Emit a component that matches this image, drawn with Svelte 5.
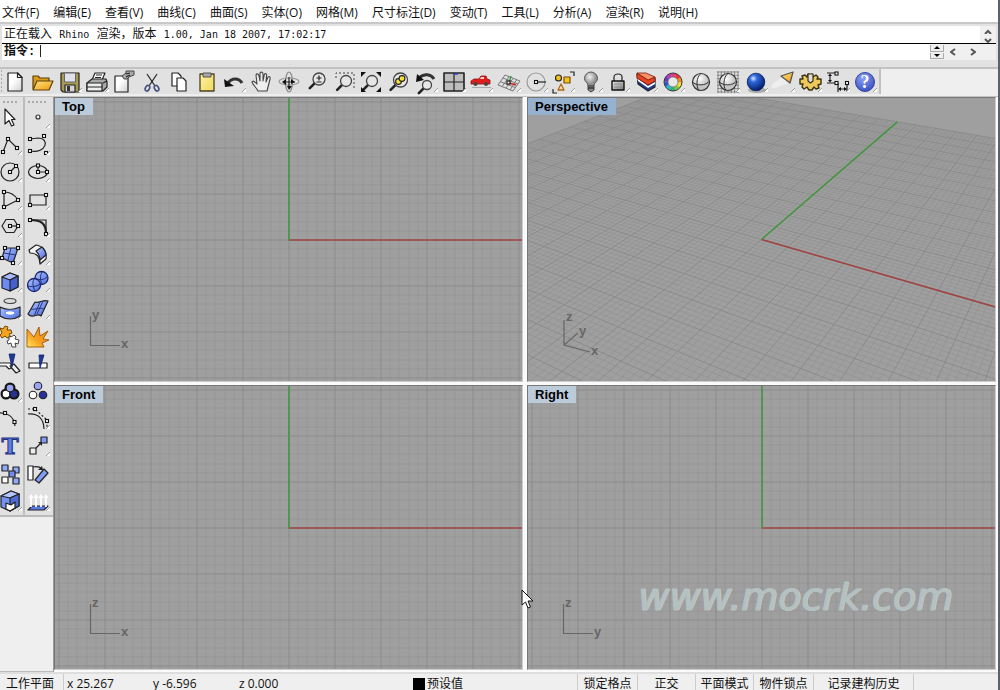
<script>
  const menus = ['文件(F)', '编辑(E)', '查看(V)', '曲线(C)', '曲面(S)', '实体(O)', '网格(M)', '尺寸标注(D)', '变动(T)', '工具(L)', '分析(A)', '渲染(R)', '说明(H)'];

  // square control-point handle
  const n = (x, y) => `<rect x="${x - 1.5}" y="${y - 1.5}" width="3" height="3" fill="#fff" stroke="#111" stroke-width="1.1"/>`;
  const s = (d, extra = '') => `<path d="${d}" fill="none" stroke="#222" stroke-width="1.2" ${extra}/>`;
  const f = (d, fill, extra = 'stroke="#222" stroke-width="1.2"') => `<path d="${d}" fill="${fill}" stroke-linejoin="round" ${extra}/>`;
  const w = (d, stroke, width) => `<path d="${d}" fill="none" stroke="${stroke}" stroke-width="${width}"/>`;
  const lens = (x, y, r, fill = '#e6e6e6') =>
    `<path d="M${x - r * 0.7} ${y + r * 0.7}L${x - r * 0.7 - 5} ${y + r * 0.7 + 5}" stroke="#222" stroke-width="2.6" stroke-linecap="round"/><circle cx="${x}" cy="${y}" r="${r}" fill="${fill}" stroke="#444" stroke-width="1.3"/>`;
  const dot = (x, y, r, fill) => `<circle cx="${x}" cy="${y}" r="${r}" fill="${fill}" stroke="#222" stroke-width="1.1"/>`;

  const hue = ['#e8342c', '#f08a1c', '#f4e02a', '#7cc83a', '#2cb06a', '#28b8d8', '#2a58d0', '#6a3ac0', '#b83ab8', '#e03a80'];
  const wheel = hue
    .map((c, i) => {
      const a = (i / 10) * Math.PI * 2 - 1.2, b = a + 0.66;
      return w(`M${13 + 7 * Math.cos(a)} ${13 + 7 * Math.sin(a)}A7 7 0 0 1 ${13 + 7 * Math.cos(b)} ${13 + 7 * Math.sin(b)}`, c, 3.6);
    })
    .join('');
  const mesh = [3, 6.3, 9.6, 13, 16.3, 19.6, 23].map((v) => `M${v} 2V24M2 ${v}H24`).join('');
  const wire = '<circle cx="13" cy="13" r="8.5" fill="url(#pearl)" stroke="#333" stroke-width="1.2"/><path d="M13 4.500C8 8 8 18 11 21.500M4.500 13C8 17 18 17 21.500 12" fill="none" stroke="#333"/>';

  const tools = [
    ['新建', f('M6 4H15.500L20 8.500V22H6Z', 'url(#paper)') + f('M15.500 4V8.500H20Z', '#fff'), 0],
    ['打开', f('M4 20V7H9L11 9H20V12', '#d99a1c', 'stroke="#5c420a" stroke-width="1.2"') + f('M4 21L8 12H24L20 21Z', 'url(#gold)', 'stroke="#5c420a" stroke-width="1.2"'), 0],
    ['保存', f('M4 4H22V23H6L4 21Z', '#a89b52') + f('M7.500 4H18.500V13H7.500Z', '#dfe0ea', 'stroke="#666"') + f('M8 16H18V23H8Z', '#d6d6d6') + '<path d="M10 17H13V22H10Z" fill="#333"/>', 1],
    ['打印', f('M8 11L11 4H21L18 11Z', '#fff') + s('M12 6H18M11 8.500H17') + f('M3 14L8 10H22L23 13V18L19 22H3Z', '#aaa') + f('M3 14H18V22H3Z', '#eee') + s('M3 18H18M19 14L23 12', 'stroke-width="2"'), 1],
    ['属性', f('M4 7H17V23H4Z', 'url(#paper)') + f('M11 7L15 4V2H23V6L18 8L16 10H13Z', '#a9a9a9', 'stroke="#444"') + s('M15 5L19 4M15 8L19 6', 'stroke="#333"'), 0],
    ['剪切', s('M8 5L16 17', 'stroke="#444" stroke-width="1.8"') + s('M18 5L10 17', 'stroke="#444" stroke-width="1.8"') + '<ellipse cx="8.500" cy="19" rx="2" ry="3" transform="rotate(30 8 19)" fill="none" stroke="#4a5080" stroke-width="1.600"/><ellipse cx="17.500" cy="19" rx="2" ry="3" transform="rotate(-30 18 19)" fill="none" stroke="#4a5080" stroke-width="1.600"/>', 0],
    ['复制', f('M6 4H12L15 7V17H6Z', '#fff') + f('M11 9H17L20 12V22H11Z', '#fff'), 0],
    ['粘贴', f('M6 5H20V22H6Z', 'url(#yellow)', 'stroke="#4a4320" stroke-width="1.3"') + f('M9 4H17V8H9Z', '#a8a8a0', 'stroke="#555"'), 0],
    ['撤销', w('M6 15C11 8 18 9 21 14', '#333', 3.2) + '<path d="M3 10L4 18L13 17Z" fill="#111"/>', 1],
    ['平移', f('M9 22C7 18 4 16 3 13C4 11 6 13 8 15L7 6C8 4 9.500 5 10 7L11 12V4C12 2.500 14 3 14 5V12L15.500 5C17 4 18 5 17.500 7L17 13L19 8C20.500 7 21.500 8 21 10L18 22Z', '#eee', 'stroke="#444" stroke-width="1.1"'), 0],
    ['旋转视图', '<ellipse cx="13" cy="12.500" rx="10" ry="3.500" fill="none" stroke="#999" stroke-width="1.200"/><ellipse cx="13" cy="13" rx="3.500" ry="10" fill="none" stroke="#888" stroke-width="1.200"/>' + s('M8 13H19M13 8V18') + '<path d="M6 13L10 10V16ZM15 10L19 13L15 15ZM11 17H16L13 21Z" fill="#111"/>', 0],
    ['缩放', lens(15, 10, 6) + s('M12.500 9H17.500M15 6.500V11.500M12.500 13H17.500'), 0],
    ['框选缩放', '<path d="M5 9V4H23V20" fill="none" stroke="#444" stroke-dasharray="2 2"/>' + lens(15, 12, 5.5), 0],
    ['缩放至最大', lens(14, 12, 5.5) + '<path d="M3 3H8L3 8ZM23 3V8L18 3ZM3 23V18L8 23ZM23 23H18L23 18Z" fill="#111"/>', 0],
    ['缩放至选取', lens(14.5, 11, 7) + dot(12.5, 12.5, 2.9, '#f6e03a') + dot(16, 9.5, 2.9, '#f6e03a'), 0],
    ['复原视图', lens(14, 16, 4.5) + w('M6 9C11 4 18 5 21 10', '#333', 3) + '<path d="M4 5L3 13L11 11Z" fill="#111"/>', 1],
    ['四视图', f('M3 4H23V22H3Z', '#bdbdbd', 'stroke="#222" stroke-width="1.6"') + s('M13 4V22M3 13H23', 'stroke-width="1.600"') + '<path d="M13 5H17" stroke="#2c46b0" stroke-width="1.500"/>', 1],
    ['右视图', '<path d="M3 15V12L6 10H11L13 7H18L19 10L22 11V15Z" fill="#e01e1e" stroke="#901010" stroke-width=".8"/><path d="M13 8H16V10H12Z" fill="#f3d0d0"/><circle cx="7.500" cy="15" r="2" fill="#444"/><circle cx="18" cy="15" r="2" fill="#444"/><path d="M4 18.500H23" stroke="#aaa"/>', 1],
    ['工作平面', w('M9 6L24 12L17 22L2 16ZM7 9L22 15M4 12.500L19 18.500M13 8L6 17.500M17 9.500L10 19M20.500 11L14 21', '#777', 1) + w('M13 14L15 7', '#2b9c3a', 1.3) + w('M13 14L20 16', '#c22', 1.5) + n(12.5, 13.5), 1],
    ['设置', '<circle cx="13" cy="13" r="9" fill="none" stroke="#999" stroke-width="1.200"/>' + s('M13 13H23') + n(13, 13), 1],
    ['选取', dot(8.5, 9, 3, '#f5c21c') + f('M14 8H20V14H14Z', '#f5c21c', 'stroke="#7a4c08" stroke-width="1.2"') + f('M8 21L11 15L14 21Z', '#f1e1b8', 'stroke="#b06a10" stroke-width="1.3"') + s('M20 3H24V7M3 20V24H7', 'stroke-width="1.600"'), 1],
    ['隐藏', f('M10 17C10 13 6.500 13 6.500 9.500A6.500 6.500 0 0 1 19.500 9.500C19.500 13 16 13 16 17Z', 'url(#bulb)', 'stroke="#555"') + f('M10 17H16V21L13 23L10 21Z', '#888', 'stroke="#444"') + s('M10 19H16', 'stroke="#eee"'), 1],
    ['锁定', s('M9 12V8C9 4 17 4 17 8V12', 'stroke-width="1.900"') + f('M7 12H19V21H7Z', 'url(#metal)', 'stroke="#111" stroke-width="1.4"') + w('M9 15H17M9 18H17', '#888', 1), 1],
    ['图层', f('M4 5L5 15L15 22L22 18V9L15 13Z', '#223a88') + f('M4 9L15 17L22 13V15L15 19L5 12Z', '#fff', '') + f('M4 4L15 11L22 8V12L15 16L4 9Z', '#e7431f', 'stroke="#7a1b10" stroke-width=".8"') + f('M4 4L13 4L22 8L15 11Z', '#f89068', 'stroke="#7a1b10" stroke-width=".8"'), 1],
    ['颜色', wheel + '<circle cx="13" cy="13" r="9" fill="none" stroke="#333" stroke-width="1"/><circle cx="13" cy="13" r="5" fill="#e8e8e8" stroke="#444" stroke-width=".6"/>', 1],
    ['着色', wire, 0],
    ['着色网格', `<path d="${mesh}" stroke="#777" stroke-width=".8"/>` + wire, 1],
    ['渲染', '<ellipse cx="14" cy="21" rx="9" ry="3" fill="#aaa"/><circle cx="13" cy="13" r="8.800" fill="url(#ball)" stroke="#06205e" stroke-width=".8"/>', 1],
    ['灯光', '<path d="M14 7L2 15V20L19 14Z" fill="#f4f4f4" opacity=".7"/>' + f('M11 7L23 3L20 14Z', 'url(#gold)', 'stroke="#555" stroke-width="1.300"'), 1],
    ['选项', f('M3 10L6 10L5 7L8 6L10 8L11 5H12V10H15V5L16 8L19 6L21 8L20 10L24 10V15L21 16L22 19L19 20L17 18L15 21H12L10 18L7 20L5 18L6 15L3 15Z', '#edc95c', 'stroke="#3b3010" stroke-width="1.400"') + f('M11 5H16V12L13.500 14L11 12Z', '#ddd', 'stroke="#3b3010" stroke-width="1.200"'), 1],
    ['尺寸标注', s('M2 4H11M2 14H10M5 6V12M13 14V23M22 14V23M14 20H21') + '<path d="M3 7L5 4.500L7 7ZM3 11L5 13.500L7 11ZM16 18V22L13 20ZM19 18V22L22 20Z" fill="#111"/>' + n(11.5, 4.5) + n(11.5, 14) + n(22, 14), 1],
    ['说明', '<circle cx="13" cy="13" r="9.500" fill="url(#help)" stroke="#3344a0"/><text x="13" y="19" text-anchor="middle" font-family="Liberation Serif, serif" font-weight="700" font-size="18" fill="#fff">?</text>', 1],
  ];

  const left = [
    ['选取', f('M8 4V19L12 15.500L14.500 21L17 20L14.500 14.500H18Z', '#fff'), 0],
    ['多重直线', s('M6 20L11 7L20 16') + n(6, 20) + n(11, 7) + n(20, 16), 1],
    ['圆', '<circle cx="13" cy="13" r="9" fill="none" stroke="#222" stroke-width="1.200"/>' + s('M13 13L19 7') + n(13, 13) + n(19, 7), 1],
    ['圆弧', s('M7 20L21 13', 'stroke="#999"') + s('M7 20V5C14 5 18 8 21 13') + n(7, 5) + n(21, 13) + n(7, 20), 1],
    ['多边形', s('M5 12L9 5.500H17L21 12L17 18.500H9Z') + s('M13 12H21') + n(13, 12) + n(21, 12), 1],
    ['曲面', f('M8 6H21L16 21L5 16Z', 'url(#blue)') + w('M14 6L11 18M7 11L19 13', '#26357c', 1) + n(8, 6) + n(21, 6) + n(5, 16) + n(16, 21), 1],
    ['立方体', f('M5 8L13 4L21 7V18L13 22L5 19Z', '#6c8af4') + f('M5 8L13 4L21 7L13 11Z', '#a9bcff') + f('M13 11L21 7V18L13 22Z', '#4460cc'), 1],
    ['挤出曲面', '<ellipse cx="13" cy="5" rx="6" ry="2.500" fill="#ddd" stroke="#444" stroke-width="1.200"/>' + f('M3 11C9 14 17 14 23 11V20C17 24 9 24 3 20Z', 'url(#blue)') + '<ellipse cx="13" cy="17" rx="5" ry="2.300" fill="#fff" stroke="#6a86f0" stroke-width="1.200"/>', 1],
    ['组合', f('M3 4L6 5L8 2L11 3L10 6L14 6L15 9L12 10L14 13L10 14L8 12L5 14L3 11L5 9Z', '#f5a51c', 'stroke="#704808"') + f('M12 12L14 13L17 11L19 13L18 15L22 16L21 20L18 19L19 23L15 23L14 19L11 20L10 17L12 16Z', '#fff', 'stroke="#444"'), 0],
    ['修剪', f('M0 12H13L16 16L12 18L9 15H0Z', '#fff') + f('M13 15L17 13L23 20L19 22Z', '#eee') + f('M12 3H18L15 16Z', '#1d3a94', 'stroke="#10246a" stroke-width=".8"'), 0],
    ['群组', '<g stroke="#111" stroke-width="4"><circle cx="13" cy="9" r="3.500"/><circle cx="9" cy="15" r="3.500"/><circle cx="17" cy="15" r="3.500"/></g>' + dot(9, 15, 3.8, '#fff') + dot(17, 15, 3.8, '#28309a') + dot(13, 9, 3.8, '#9ba6f2'), 1],
    ['编辑点', s('M0 7C10 6 17 10 18 20', 'stroke-width="1.700"') + n(8, 7) + n(17.5, 16), 0],
    ['文字', '<text x="13" y="21" text-anchor="middle" font-family="DejaVu Serif, serif" font-weight="700" font-size="23" fill="#5c80e8" stroke="#1d2f78" stroke-width="1">T</text>', 0],
    ['移动', f('M5 4H11V10H5Z', '#8fa9fb') + f('M16 6H22V12H16Z', '#8fa9fb') + f('M5 16H11V22H5Z', '#fff') + f('M12 10H18V16H12Z', '#6f8df2') + f('M16 17H22V23H16Z', '#8fa9fb'), 0],
    ['布尔运算', f('M4 8L14 3L22 6V18L13 23L4 19Z', '#7492f4') + f('M4 8L14 3L22 6L13 10Z', '#b5c6ff') + f('M13 10L22 6V18L13 23Z', '#4c6cd4') + f('M9 15L14 17L18 14V20L13 23L9 21Z', '#fff'), 1],
  ];

  const right = [
    ['点', '<circle cx="13" cy="12" r="2" fill="#eee" stroke="#333" stroke-width="1.200"/>', 1],
    ['曲线', s('M5 19C22 22 25 6 13 6L5 7') + n(5, 19) + n(5, 7) + n(19, 4) + n(21, 21), 1],
    ['椭圆', '<ellipse cx="13" cy="13" rx="9.500" ry="6.500" fill="none" stroke="#222" stroke-width="1.200"/>' + s('M13 7V13H22') + n(13, 6.5) + n(13, 13) + n(22, 13), 1],
    ['矩形', s('M5 8H21V18H5Z') + n(21, 8) + n(5, 18), 1],
    ['圆角', s('M5 6H21V20', 'stroke="#888"') + w('M5 6C16 6 21 9 21 20', '#222', 2.2) + n(5, 6) + n(21, 20), 1],
    ['旋转成形', f('M4 8L11 3C18 4 22 10 21 17L15 22C15 15 12 11 5 11Z', '#f4f4f4') + f('M11 9L17 5C20 8 21 10 21 13L15 18C15 14 13 11 11 9Z', 'url(#blue)'), 1],
    ['布尔联集', '<circle cx="16.500" cy="9" r="6.500" fill="url(#blue)" stroke="#18276c" stroke-width="1.300"/><circle cx="9" cy="16" r="6.500" fill="url(#blue)" stroke="#18276c" stroke-width="1.300"/><path d="M17 3C15 7 15 11 17 15M11 10C15 11 19 11 22 8M9 10C7 14 8 18 10 22M3 17C7 18 11 18 15 15" fill="none" stroke="#18276c" stroke-width=".9"/>', 1],
    ['曲面工具', f('M3 18L10 6C14 8 18 3 23 5L16 20C12 16 8 24 3 18Z', 'url(#blue)') + w('M9 20L15 6M6 13C11 14 14 11 19 13M12 18L18 5', '#26357c', 1), 1],
    ['炸开', f('M2 23V5L9 13L14 3L15 12L23 7L18 15L24 16L17 19L19 23Z', 'url(#flame)', 'stroke="#9a5708" stroke-width=".9"'), 0],
    ['分割', f('M4 12H22V17H4Z', '#fff') + f('M14 4H19L15 17Z', '#1d3a94', 'stroke="#10246a" stroke-width=".8"'), 0],
    ['解散群组', dot(13, 7, 3.8, '#9ba6f2') + dot(8, 16, 3.8, '#fff') + dot(18, 16, 3.8, '#28309a'), 0],
    ['控制点', s('M3 8C13 7 19 13 19 23', 'stroke-width="1.900"') + s('M3 3H10L22 14V23', 'stroke-dasharray="2 2"') + n(10, 3) + n(22, 15), 1],
    ['缩放', f('M5 15H11V21H5Z', '#eee') + f('M16 4H22V10H16Z', '#7f9bf6') + s('M11 15L16 10') + '<path d="M17 9V13L13 9Z" fill="#222"/>', 1],
    ['定位', f('M3 5H8V19H3Z', '#fff') + f('M10 19L19 8L23 12L14 22Z', '#7f9bf6') + s('M8 6C13 5 16 7 17 8') + '<path d="M13 9L18 9L17 5Z" fill="#222"/>', 0],
    ['拉伸', f('M3 22L7 18H23L19 22Z', '#5a7ae8') + '<path d="M6 19V8M11 19V8M16 19V8M21 19V8" stroke="#fff" stroke-width="1.800"/><path d="M3.500 10L6 6L8.500 10ZM8.500 10L11 6L13.500 10ZM13.500 10L16 6L18.500 10ZM18.500 10L21 6L23.500 10Z" fill="#fff"/>', 1],
  ];

  const corner = '<path d="M25 19V23H21Z" fill="#fff"/><path d="M21 23L25 19" stroke="#888" stroke-width=".8"/>';

  // construction plane grid, 9.2px per unit, heavier line every fifth unit
  let minor = '', major = '';
  for (let i = -70; i <= 70; i++) {
    const p = Math.round(i * 9.2) + 0.5;
    const d = `M${p} -644V644M-644 ${p}H644`;
    if (i % 5) minor += d;
    else major += d;
  }

  // camera looks at the origin from 100 units away, 30 degrees above the plane
  const project = (x, y) => {
    const depth = 100 - 0.433 * x + 0.75 * y;
    return `${((592 * (0.866 * x + 0.5 * y)) / depth).toFixed(1)} ${((-592 * (-0.25 * x + 0.433 * y)) / depth).toFixed(1)}`;
  };
  let pMinor = '', pMajor = '';
  for (let i = -70; i <= 70; i++) {
    const d = `M${project(i, -70)}L${project(i, 70)}M${project(-70, i)}L${project(70, i)}`;
    if (i % 5) pMinor += d;
    else pMajor += d;
  }

  const views = [
    { name: 'Top', h: 'x', v: 'y' },
    { name: 'Perspective', active: true },
    { name: 'Front', h: 'x', v: 'z' },
    { name: 'Right', h: 'y', v: 'z', mark: true },
  ];
</script>

{#snippet tool([label, body, more])}
  <button class="tool" aria-label={label}>
    <svg width="26" height="26" viewBox="0 0 26 26">{@html body + (more ? corner : '')}</svg>
  </button>
{/snippet}

<svg class="defs" width="0" height="0" aria-hidden="true">
  <defs>
    <linearGradient id="paper" x2="1" y2="1"><stop offset=".4" stop-color="#fff" /><stop offset="1" stop-color="#d0d0d0" /></linearGradient>
    <linearGradient id="gold" x2="1" y2="1"><stop stop-color="#ffe680" /><stop offset="1" stop-color="#f09810" /></linearGradient>
    <linearGradient id="yellow" x2="1" y2="1"><stop stop-color="#fff3a0" /><stop offset="1" stop-color="#f0d860" /></linearGradient>
    <linearGradient id="flame" x1="1" x2="0" y2="1"><stop stop-color="#f08010" /><stop offset=".6" stop-color="#f8a020" /><stop offset="1" stop-color="#ffe860" /></linearGradient>
    <linearGradient id="metal" x2="1" y2="1"><stop stop-color="#eee" /><stop offset="1" stop-color="#777" /></linearGradient>
    <linearGradient id="blue" x2="1" y2="1"><stop stop-color="#b4c6ff" /><stop offset="1" stop-color="#4a6ae0" /></linearGradient>
    <radialGradient id="bulb" cx=".4" cy=".35"><stop stop-color="#f0f0f0" /><stop offset="1" stop-color="#909090" /></radialGradient>
    <radialGradient id="pearl" cx=".4" cy=".3"><stop stop-color="#fff" /><stop offset="1" stop-color="#c4c4c4" /></radialGradient>
    <radialGradient id="ball" cx=".35" cy=".3" r=".7"><stop stop-color="#d8e8ff" /><stop offset=".3" stop-color="#2f68dc" /><stop offset="1" stop-color="#03206c" /></radialGradient>
    <radialGradient id="help" cx=".4" cy=".3" r=".7"><stop stop-color="#8ea2f4" /><stop offset="1" stop-color="#3c52c4" /></radialGradient>
  </defs>
</svg>

<div class="app">
  <nav class="menu">
    {#each menus as m}<button>{m}</button>{/each}
  </nav>

  <section class="command">
    <div class="history">
      <p>正在载入 <span>Rhino</span> 渲染，版本 <span>1.00, Jan 18 2007, 17:02:17</span></p>
      <div class="scroll">
        <button aria-label="向上"><svg width="10" height="5" viewBox="0 0 10 5"><path d="M2 5L5 2L8 5" /></svg></button>
        <button aria-label="向下"><svg width="10" height="5" viewBox="0 0 10 5"><path d="M2 1L5 4L8 1" /></svg></button>
      </div>
    </div>
    <div class="prompt">
      <label for="cmd">指令:</label>
      <i class="caret"></i>
      <input id="cmd" type="text" />
      <div class="spin">
        <button aria-label="增加"><svg width="6" height="3" viewBox="0 0 6 3"><path d="M0 3L3 0L6 3Z" /></svg></button>
        <button aria-label="减少"><svg width="6" height="3" viewBox="0 0 6 3"><path d="M0 0L3 3L6 0Z" /></svg></button>
      </div>
      <div class="pager">
        <button aria-label="上一个"><svg width="6" height="8" viewBox="0 0 6 8"><path d="M5 1L1 4L5 7" /></svg></button>
        <button aria-label="下一个"><svg width="6" height="8" viewBox="0 0 6 8"><path d="M1 1L5 4L1 7" /></svg></button>
      </div>
    </div>
  </section>

  <div class="toolbar">
    <div class="tools">
      {#each tools as t}{@render tool(t)}{/each}
    </div>
  </div>

  <main>
    <aside>
      <div class="box">
        <div class="col first">{#each left as t}{@render tool(t)}{/each}</div>
        <div class="col">{#each right as t}{@render tool(t)}{/each}</div>
      </div>
    </aside>
    <div class="views">
      {#each views as v}
        <section class="view">
          <svg class="scene" width="100%" height="100%">
            <svg x="50%" y="50%" overflow="visible">
              {#if v.active}
                <path d={pMinor} class="thin" />
                <path d={pMajor} class="thick" />
                <path d="M{project(0, 0)}L{project(70, 0)}" class="red" />
                <path d="M{project(0, 0)}L{project(0, 70)}" class="green" />
              {:else}
                <path d={minor} class="minor" />
                <path d={major} class="major" />
                <path d="M0 0.500H644" class="red" />
                <path d="M0.500 1V-644" class="green" />
              {/if}
            </svg>
            <svg x="0" y="100%" overflow="visible" class="axes">
              {#if v.active}
                <path d="M36 -61V-36L62 -29M36 -36L50 -48" />
                <text x="38" y="-60">z</text>
                <text x="51" y="-46">y</text>
                <text x="63" y="-26">x</text>
              {:else}
                <path d="M35.500 -65V-35.500H65" />
                <text x="37" y="-62">{v.v}</text>
                <text x="66" y="-33">{v.h}</text>
              {/if}
            </svg>
          </svg>
          <h2 class:active={v.active}>{v.name}</h2>
          {#if v.mark}<div class="mark">www.mocrk.com</div>{/if}
        </section>
      {/each}
      <svg class="cursor" width="14" height="20" viewBox="0 0 14 20"><path d="M1 1V16L4.500 13L7 19L9.500 18L7 12H12Z" fill="#fff" stroke="#111" /></svg>
    </div>
  </main>

  <footer>
    <span class="plane">工作平面</span>
    <span class="coord">x 25.267</span>
    <span class="coord">y -6.596</span>
    <span class="coord">z 0.000</span>
    <span class="layer"><i></i>预设值</span>
    <button class="wide">锁定格点</button>
    <button>正交</button>
    <button>平面模式</button>
    <button class="wide">物件锁点</button>
    <button class="record">记录建构历史</button>
    <span class="end"></span>
  </footer>
</div>

<style>
  :global(body) { margin: 0; background: #5b6168; }
  .defs { position: absolute; }
  button { border: 0; padding: 0; margin: 0; background: none; font: inherit; color: inherit; }
  .app {
    height: 100vh; margin-right: 2px; display: flex; flex-direction: column; overflow: hidden;
    background: #efefef; color: #111; font: 12px/16px "Open Sans", "Noto Sans CJK SC", sans-serif;
  }
  .menu { display: flex; gap: 14px; height: 24px; padding: 4px 2px 0; align-items: center; background: #fff; border-bottom: 2px solid #c8c8c8; flex: none; box-sizing: border-box; white-space: nowrap; }
  .command { flex: none; padding: 2px 2px 7px; background: #e2e2e2; border-bottom: 2px solid #c2c2c2; font: 12px/16px "Liberation Mono", "Noto Sans CJK SC", monospace; }
  .history { display: flex; justify-content: space-between; height: 17px; background: #fff; border-bottom: 1px solid #000; }
  .history p { margin: 0; padding-left: 2px; white-space: pre; line-height: 18px; }
  .history span { font-family: "DejaVu Sans Mono", monospace; font-size: 10px; }
  .scroll { width: 16px; background: #f0f0f0; display: flex; flex-direction: column; justify-content: space-between; align-items: center; padding-top: 3px; box-sizing: border-box; overflow: hidden; }
  .scroll button { display: block; height: 5px; line-height: 0; }
  .scroll path, .pager path { fill: none; stroke: #555; stroke-width: 2; }
  .prompt { display: flex; height: 16px; background: #fff; }
  .prompt label { padding-left: 2px; line-height: 16px; font-weight: 700; }
  .caret { width: 1px; height: 12px; margin: 1px 0 0 5px; background: #222; }
  .prompt input { flex: 1; min-width: 0; border: 0; padding: 0; outline: 0; background: none; font: inherit; }
  .spin { width: 14px; display: flex; flex-direction: column; gap: 1px; padding: 1px 0; background: #f0f0f0; }
  .spin button { flex: 1; background: #eee; border: 1px solid #aaa; border-top: 0; line-height: 0; }
  .pager { width: 52px; display: flex; gap: 12px; padding-left: 5px; box-sizing: border-box; background: #f0f0f0; }
  .pager button { width: 8px; line-height: 0; }

  .toolbar { flex: none; display: flex; height: 27px; background: #efefef; }
  .tools { display: grid; grid-template-columns: repeat(32, 1fr); width: 878px; height: 25px; padding-left: 1px; border-right: 2px solid #c0c0c0; background: radial-gradient(#aaa 1px, transparent 1px) 0 0 / 3px 4px repeat-y #e1e1e1; }
  .tool { display: flex; align-items: center; justify-content: center; min-width: 0; min-height: 0; }
  .tool svg { flex: none; display: block; }

  main { flex: 1; min-height: 0; display: flex; border-top: 1px solid #c4c4c4; }
  aside { width: 54px; flex: none; border-right: 1px solid #999; box-sizing: border-box; border-bottom: 1px solid #bbb; }
  .box { display: flex; border-bottom: 2px solid #bbb; background: #e1e1e1; }
  .col { display: grid; grid-template-rows: 7px repeat(15, 1fr); height: 418px; width: 28px; box-sizing: border-box; padding-right: 2px; }
  .col::before { content: ""; margin: 3px 4px 0 2px; background: radial-gradient(#aaa 1px, transparent 1px) 0 0 / 4px 4px; }
  .col .tool { justify-content: flex-end; }
  .first { width: 23px; padding: 0; overflow: hidden; border-right: 2px solid #bdbdbd; box-sizing: content-box; }

  .views { position: relative; flex: 1; min-width: 0; display: grid; grid-template: 1fr 1fr / 1fr 1fr; gap: 3px 4px; padding: 0 2px 2px 0; background: #fafafa; }
  .view { position: relative; min-width: 0; min-height: 0; overflow: hidden; border: 1px solid #777; border-right-color: #ccc; border-bottom-color: #ccc; background: #9f9f9f; }
  .scene { position: absolute; inset: 0; display: block; }
  .scene path { fill: none; }
  .minor { stroke: #979797; }
  .major { stroke: #8b8b8b; }
  .thin { stroke: #8e8e8e; stroke-width: 0.5; }
  .thick { stroke: #868686; stroke-width: 0.8; }
  .red { stroke: #a04444; stroke-width: 1.6; }
  .green { stroke: #43953f; stroke-width: 1.6; }
  .axes { font: 700 13px "Liberation Sans", sans-serif; fill: #666; }
  .axes path { stroke: #666; stroke-width: 1.2; }
  h2 { position: absolute; top: 0; left: 0; margin: 0; padding: 0 8px 0 7px; font: 700 13px/17px "Liberation Sans", sans-serif; background: #bccbda; color: #000; }
  h2.active { background: #97b2d1; }
  .mark { position: absolute; right: 42px; bottom: 50px; font: italic 38px/44px "DejaVu Sans", sans-serif; color: #b5c1c1; -webkit-text-stroke: 1px #b5c1c1; text-shadow: 1px 0 #d0d8d8; }
  .cursor { position: absolute; left: calc(50% - 5px); bottom: 63px; }

  footer { flex: none; height: 16px; display: flex; overflow: hidden; border-top: 2px solid #dedede; line-height: 20px; white-space: nowrap; }
  footer > * { box-sizing: border-box; flex: none; }
  .plane { width: 64px; padding-left: 6px; border-right: 1px solid #ccc; }
  .coord { width: 86px; padding-left: 3px; }
  .layer { flex: 1 1 auto; padding-left: 91px; display: flex; gap: 2px; }
  .layer i { width: 12px; height: 12px; margin-top: 4px; background: #000; }
  footer button { width: 58px; border-left: 1px solid #ccc; }
  footer button.wide { width: 60px; }
  footer button.record { width: 100px; }
  .end { width: 85px; border-left: 1px solid #ccc; }
</style>
